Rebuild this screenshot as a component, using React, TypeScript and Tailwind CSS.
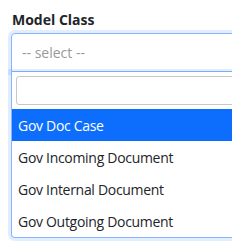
import React from "react";

export default function App() {
  const items = ["Gov Doc Case", "Gov Incoming Document", "Gov Internal Document", "Gov Outgoing Document"];
  return (
    <div className="w-[232px] h-[244px] overflow-hidden bg-white" style={{ fontFamily: '"Open Sans", "Noto Sans", sans-serif' }}>
      <div className="pl-[11px] pt-[10px]">
        <div className="text-[14px] font-bold text-[#212529] leading-[20px] pl-[1px]">Model Class</div>
        <div className="mt-[3px] w-[240px] h-[39px] border border-[#86b7fe] rounded-t-[4px] flex items-center pl-[10px] text-[14px] text-[#999] shadow-[0_0_0_3px_rgba(13,110,253,0.12)] bg-white">
          -- select --
        </div>
        <div className="w-[240px] border border-t-0 border-[#86b7fe] rounded-b-[4px] bg-white shadow-[0_0_0_3px_rgba(13,110,253,0.12)]">
          <div className="px-[4px] pt-[4px] pb-[4px]">
            <div className="h-[29px] border border-[#c8c8c8] rounded-[3px]"></div>
          </div>
          <div>
            {items.map((t, i) => (
              <div
                key={t}
                className={
                  "h-[32px] flex items-center pl-[6px] text-[14px] tracking-[-0.3px] " +
                  (i === 0 ? "bg-[#0d6efd] text-white" : "text-[#212529]")
                }
              >
                {t}
              </div>
            ))}
          </div>
        </div>
      </div>
    </div>
  );
}
